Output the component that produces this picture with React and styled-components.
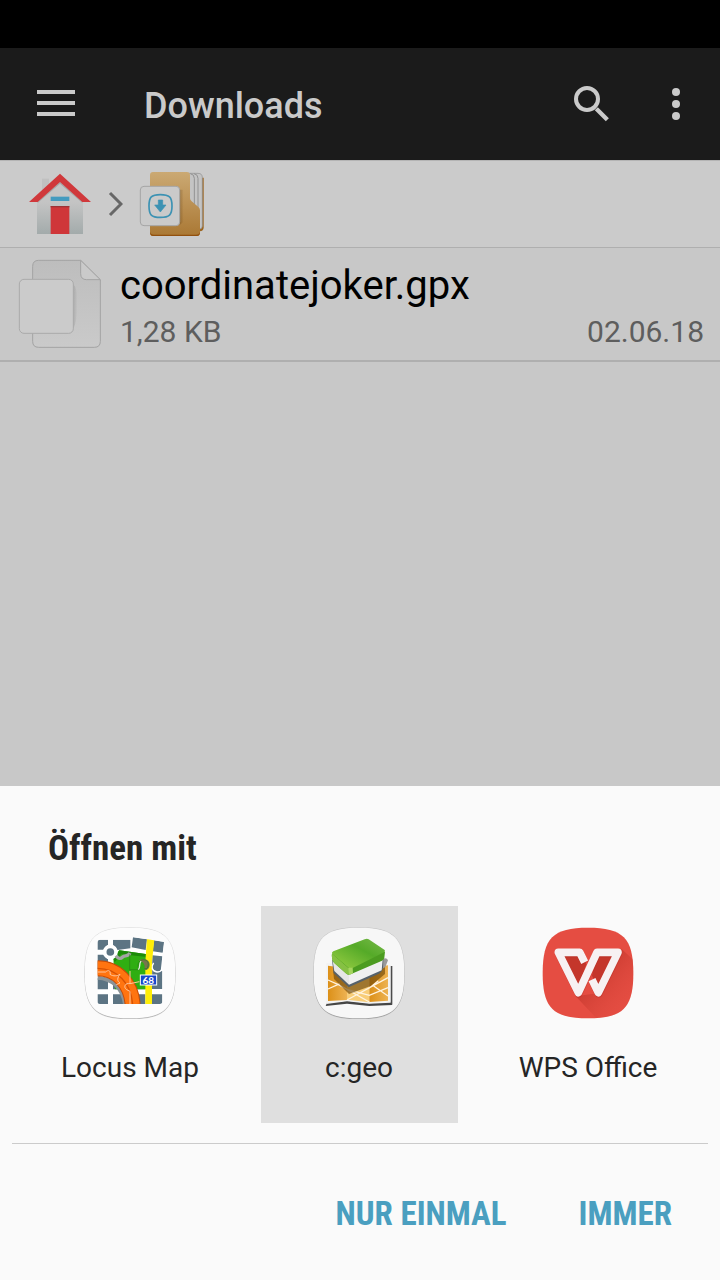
import React, { useState } from "react";
import styled, { createGlobalStyle } from "styled-components";

const GlobalStyle = createGlobalStyle`
  *, *::before, *::after { box-sizing: border-box; }
  body {
    margin: 0;
    background: #c8c8c8;
    font-family: Roboto, "Liberation Sans", sans-serif;
  }
  button {
    margin: 0;
    padding: 0;
    border: 0;
    background: none;
    font: inherit;
    color: inherit;
    cursor: pointer;
  }
  svg { display: block; flex: none; }
`;

const Page = styled.div`
  min-height: 100vh;
  display: flex;
  flex-direction: column;
`;

const StatusBar = styled.div`
  height: 48px;
  background: #000;
`;

const Toolbar = styled.header`
  display: flex;
  align-items: center;
  height: 112px;
  background: #1b1b1b;
  color: #cacaca;
`;

const ToolButton = styled.button`
  display: flex;
  align-items: center;
  justify-content: center;
  width: ${(p) => p.$width}px;
  height: 100%;
`;

const ScreenTitle = styled.h1`
  flex: 1;
  margin: 0;
  padding: 4px 0 0 32px;
  font-size: 36px;
  line-height: 44px;
  font-weight: 500;
`;

const Breadcrumb = styled.nav`
  display: flex;
  align-items: center;
  gap: 16px;
  height: 88px;
  padding: 0 28px;
  background: #cbcbcb;
  border-top: 1px solid #b4b4b4;
  border-bottom: 1px solid #afafaf;
`;

const CrumbButton = styled.button`
  display: flex;
`;

const FileList = styled.ul`
  flex: 1;
  margin: 0;
  padding: 0;
  list-style: none;
`;

const FileRow = styled.li`
  display: flex;
  align-items: center;
  gap: 18px;
  height: 114px;
  padding: 0 16px 0 18px;
  border-bottom: 2px solid #afafaf;
`;

const FileInfo = styled.div`
  flex: 1;
  min-width: 0;
  padding-top: 8px;
`;

const FileName = styled.div`
  font-size: 40px;
  line-height: 48px;
  color: #000;
`;

const FileMeta = styled.div`
  display: flex;
  justify-content: space-between;
  font-size: 30px;
  line-height: 44px;
  color: #5e5e5e;
`;

const Sheet = styled.section`
  background: #fafafa;
  color: #252525;
`;

const SheetTitle = styled.h2`
  margin: 0;
  padding: 41px 48px 35px;
  font-family: "Roboto Condensed", Roboto, sans-serif;
  font-size: 35px;
  line-height: 44px;
  font-weight: 700;
`;

const AppGrid = styled.div`
  display: grid;
  grid-template-columns: repeat(3, 1fr);
  gap: 32px;
  padding: 0 33px 20px 32px;
`;

const AppTile = styled.button`
  display: flex;
  flex-direction: column;
  align-items: center;
  gap: 31px;
  height: 217px;
  padding: 21px 1px 0 0;
  font-size: 28px;
  line-height: 36px;
  white-space: nowrap;
  background: ${(p) => (p.$selected ? "#dfdfdf" : "transparent")};
`;

const Actions = styled.footer`
  display: flex;
  justify-content: flex-end;
  gap: 72px;
  margin: 0 12px;
  padding: 44px 36px 40px;
  border-top: 1px solid #cbcbcb;
`;

const ActionButton = styled.button`
  font-family: "Roboto Condensed", Roboto, sans-serif;
  font-size: 33px;
  line-height: 52px;
  font-weight: 700;
  color: #4a9fc0;
`;

const MenuIcon = () => (
  <svg width="38" height="28" viewBox="0 0 38 28" fill="currentColor" aria-hidden="true">
    <path d="M0 0h38v4H0zM0 11h38v4H0zM0 22h38v4H0z" />
  </svg>
);

const SearchIcon = () => (
  <svg width="38" height="38" viewBox="0 0 114 114" fill="none" stroke="currentColor" aria-hidden="true">
    <circle cx="42" cy="42" r="33" strokeWidth="12" />
    <path d="M70 71l33 33" strokeWidth="13" />
  </svg>
);

const MoreIcon = () => (
  <svg width="8" height="32" viewBox="0 0 8 32" fill="currentColor" aria-hidden="true">
    <circle cx="4" cy="4" r="4" />
    <circle cx="4" cy="16" r="4" />
    <circle cx="4" cy="28" r="4" />
  </svg>
);

const HomeIcon = () => (
  <svg width="64" height="62" viewBox="54 54 192 186" aria-hidden="true">
    <defs>
      <linearGradient id="wall" x1="0" y1="0" x2="0" y2="1">
        <stop offset="0.4" stopColor="#c4c4c4" />
        <stop offset="1" stopColor="#a3abab" />
      </linearGradient>
    </defs>
    <path d="M96 71h21v35H96z" fill="#c0c0c0" />
    <path d="M150 78l69 58v101H81V136z" fill="url(#wall)" />
    <path d="M150 80l67 60v4l-67-58-67 58v-4z" fill="#000" opacity=".15" />
    <path d="M150 56l93 85h-26l-67-60-67 60H57z" fill="#d0383b" />
    <path d="M122 125h56v13h-56z" fill="#439bbf" />
    <path d="M122 153h56v84h-56z" fill="#cf3639" />
    <path d="M122 153h56v4h-56z" fill="#9e3336" />
  </svg>
);

const ChevronIcon = () => (
  <svg width="15" height="26" viewBox="0 0 15 26" fill="none" stroke="#676767" strokeWidth="3" aria-hidden="true">
    <path d="M2 2l11 11L2 24" />
  </svg>
);

const DownloadFolderIcon = () => (
  <svg width="66" height="66" viewBox="387 48 198 198" aria-hidden="true">
    <defs>
      <linearGradient id="folder" x1="0" y1="0" x2="0" y2="1">
        <stop offset="0" stopColor="#cba973" />
        <stop offset="1" stopColor="#aa7834" />
      </linearGradient>
      <linearGradient id="folderShade" x1="0" y1="0" x2="1" y2="0">
        <stop offset="0" stopColor="#50300a" stopOpacity=".3" />
        <stop offset="1" stopColor="#50300a" stopOpacity="0" />
      </linearGradient>
    </defs>
    <path d="M540 68h41v149q0 12-12 12h-29z" fill="#9c641d" />
    <path d="M530 55h34q13 0 13 13v145q0 10-12 10h-35z" fill="#c4c4c4" stroke="#8c8c8c" strokeWidth="2" />
    <path d="M541 56q12 2 12 14v90M552 56q12 2 12 14v110" fill="none" stroke="#929292" strokeWidth="3" />
    <path d="M429 51h101q10 0 10 10v69q0 5 5 9l20 17q5 4 5 10v67q0 10-10 10H430q-10 0-10-10V61q0-10 9-10z" fill="url(#folder)" />
    <path d="M420 230q0 13 10 13h130q10 0 10-13-2 9-12 9H432q-10 0-12-9z" fill="#92500e" />
    <path d="M509 104h12v96l-12 10z" fill="url(#folderShade)" />
    <rect x="391" y="94" width="118" height="118" rx="11" fill="#cacaca" stroke="#a5a5a5" strokeWidth="3" />
    <path d="M451 119c27 0 35 7 35 34s-8 34-35 34-34-7-34-34 7-34 34-34z" fill="none" stroke="#3c92b3" strokeWidth="5" />
    <path d="M445 135h13v15h10l-17 21-17-21h11z" fill="#3c92b3" stroke="#3c92b3" strokeWidth="2" strokeLinejoin="round" />
  </svg>
);

const DocumentIcon = () => (
  <svg width="84" height="90" viewBox="54 42 252 270" aria-hidden="true">
    <defs>
      <linearGradient id="paper" x1="0" y1="0" x2="0" y2="1">
        <stop offset="0" stopColor="#bdbdbd" />
        <stop offset="1" stopColor="#cacaca" />
      </linearGradient>
      <linearGradient id="paperShade" x1="0" y1="0" x2="1" y2="0">
        <stop offset="0" stopColor="#000" stopOpacity=".12" />
        <stop offset="1" stopColor="#000" stopOpacity="0" />
      </linearGradient>
    </defs>
    <path d="M116 46h126l59 59v184q0 18-18 18H116q-18 0-18-18V64q0-18 18-18z" fill="url(#paper)" stroke="#a3a3a3" strokeWidth="3" />
    <path d="M242 46v40q0 18 18 18h41z" fill="#cacaca" stroke="#a3a3a3" strokeWidth="3" strokeLinejoin="round" />
    <path d="M220 118q14 12 12 60 0 50-12 74z" fill="url(#paperShade)" />
    <rect x="58" y="103" width="162" height="162" rx="14" fill="#cbcbcb" stroke="#aaa" strokeWidth="3" />
  </svg>
);

const SQUIRCLE =
  "M180 38C285 38 316 69 316 174S285 310 180 310 44 279 44 174 75 38 180 38z";

const IconPlate = ({ fill }) => (
  <>
    <path d={SQUIRCLE} fill="none" stroke="#000" strokeWidth="3" opacity=".12" />
    <path d={SQUIRCLE} fill="#000" opacity=".2" transform="translate(0 3)" />
    <path d={SQUIRCLE} fill={fill} />
  </>
);

const LocusIcon = () => (
  <svg width="92" height="92" viewBox="42 36 276 276" aria-hidden="true">
    <defs>
      <clipPath id="locusClip">
        <path d="M92 74h90l6-8 94 14-5 50v129q0 8-8 8H90q-8 0-8-8V84q0-10 10-10z" />
      </clipPath>
    </defs>
    <IconPlate fill="#fcfcfc" />
    <g clipPath="url(#locusClip)">
      <path d="M80 64h204v206H80z" fill="#fff" />
      <path d="M82 74h32v18l-14 12H82zM129 74h52v26l-44 6-8-10zM82 119h18l14 14v30H82z" fill="#5c7483" />
      <path d="M189 67l42 6-4 32-42-8zM252 76l31 5-5 32-30-4zM247 121l30 3-5 44h5v54h-31z" fill="#5c7483" />
      <path d="M82 190h32v33H82zM82 238h32v30H82zM129 205h97v18h-97zM129 238h97v30h-97zM246 238h31v30h-31z" fill="#5c7483" />
      <path d="M130 130l18-24 84 12v105h-97z" fill="#2fae12" />
      <path d="M130 130l18-24 84 12v8l-78-8-20 24z" fill="#1c8a08" />
      <path d="M231 70l22 4-7 66v128h-20V140z" fill="#ffee08" />
      <circle cx="121" cy="111" r="17" fill="#5c7483" stroke="#fff" strokeWidth="11" />
      <path d="M138 122c6 10 14 10 20 4s16 0 22-12" fill="none" stroke="#a4a4a4" strokeWidth="10" />
      <path d="M206 137c12-9 31-5 33 10 1 12-7 20-16 18 4-15-2-27-17-28z" fill="#77744d" />
      <path d="M179 118v46h28c-7-15-1-28 13-30 14 0 19 13 11 27h-8" fill="none" stroke="#2a7d18" strokeWidth="2" />
      <path d="M205 164c8-10 0-14 8-26" fill="none" stroke="#e4e8e0" strokeWidth="4" />
      <path d="M251 144c-8 10-6 25 10 27 9 0 14-4 18-10" fill="none" stroke="#fff" strokeWidth="4" />
      <path d="M82 188c44 2 76 30 83 80" fill="none" stroke="#8a9397" strokeWidth="12" />
      <path d="M82 160c60 0 101 46 106 108" fill="none" stroke="#c74c06" strokeWidth="48" />
      <path d="M82 160c60 0 101 46 106 108" fill="none" stroke="#ff7410" strokeWidth="42" />
      <path d="M82 160c60 0 101 46 106 108" fill="none" stroke="#d75204" strokeWidth="4" />
      <path d="M82 171h25c8-8 16-4 13 7 10 7 22 5 30 0-8 10-10 20 0 26l-11 5M180 168v38c-13-4-22 10-10 18l10 5v38M180 206l28-6" fill="none" stroke="#ffc69c" strokeWidth="3" />
    </g>
    <rect x="211" y="180" width="49" height="30" fill="#1748cb" stroke="#fff" strokeWidth="3" />
    <text x="235" y="206" textAnchor="middle" fontFamily="Lato, sans-serif" fontSize="30" fontWeight="700" fill="#fff">68</text>
  </svg>
);

const CgeoIcon = () => (
  <svg width="92" height="92" viewBox="42 36 276 276" aria-hidden="true">
    <defs>
      <linearGradient id="cover" x1="0" y1="1" x2="1" y2="0">
        <stop offset="0" stopColor="#9bd044" />
        <stop offset=".6" stopColor="#55aa28" />
        <stop offset="1" stopColor="#78b94a" />
      </linearGradient>
      <linearGradient id="mapFold" x1="0" y1="0" x2="1" y2="0">
        <stop offset="0" stopColor="#dc9018" />
        <stop offset="1" stopColor="#edb252" />
      </linearGradient>
    </defs>
    <IconPlate fill="#f7f7f7" />
    <path d="M84 263l60-6 67 8 68-5v10l-68 3-67-7-64 7z" fill="#454545" />
    <path d="M274 153h6v116h-6z" fill="#4c4c4c" />
    <path d="M82 143l62 10 67 4 64-8v114l-64 3-67-7-62 8z" fill="#f2f2f2" />
    <path d="M87 152l57 8v95l-57 3z" fill="url(#mapFold)" />
    <path d="M144 160h67v102l-67-8z" fill="#f8cd78" />
    <path d="M211 160l56-9v106l-56 4z" fill="url(#mapFold)" />
    <path d="M87 195l36 16 88 50M87 222l36-16M144 223l67 18 56-23M144 255l123-67M224 213l43 30M211 219l27-22" fill="none" stroke="#fff3df" strokeWidth="4" />
    <path d="M102 165l3 27 45 45 65-24 43-36v-30z" fill="#6f4607" opacity=".65" />
    <path d="M249 132q14-6 18 4l-8 20-14 8z" fill="#9a9a9a" />
    <path d="M99 136l5 38 45 43 91-41q10-6 12-18l1-24z" fill="#56616a" />
    <path d="M101 138l49 38v33l-44-41z" fill="#e6e6e6" />
    <path d="M150 176l101-42-3 32-98 43z" fill="#f0f0f0" />
    <path d="M99 116q-1 5 0 12 1 10 6 15l38 34q5 4 12 1l94-41q6-3 7-9l2-18z" fill="#4c9c20" />
    <path d="M99 116q-1 5 0 12 1 10 6 15l38 34q4 3 8 2v-18z" fill="#86c043" />
    <path d="M103 109l94-36q7-3 12 0l47 31q5 4-1 8l-94 47q-6 3-12-1l-48-40q-5-5 2-9z" fill="url(#cover)" />
    <path d="M148 158l2 21q6 0 12-4l-1-17z" fill="#a6d55f" />
  </svg>
);

const WpsIcon = () => (
  <svg width="92" height="92" viewBox="36 36 276 276" aria-hidden="true">
    <defs>
      <clipPath id="wpsClip">
        <path d={SQUIRCLE} transform="translate(-6 0)" />
      </clipPath>
      <linearGradient id="wpsShade" x1="0" y1="0" x2="1" y2="1">
        <stop offset=".2" stopColor="#b93025" stopOpacity=".8" />
        <stop offset=".8" stopColor="#e24c41" stopOpacity="0" />
      </linearGradient>
    </defs>
    <path d={SQUIRCLE} transform="translate(-6 0)" fill="#e54d42" />
    <path clipPath="url(#wpsClip)" d="M275 102l70 65v170H225l-88-93 70-10z" fill="url(#wpsShade)" />
    <path d="M97 116h55l17 32-24 72zM201 116h50l-47 103-18-37z" fill="#c4362b" />
    <path d="M164 142l-15-30H85l60 121 56-121h63l-59 121-19-39" fill="none" stroke="#a82c23" strokeOpacity=".3" strokeWidth="24" strokeLinejoin="round" transform="translate(1 3)" />
    <path d="M164 142l-15-30H85l60 121 56-121h63l-59 121-19-39" fill="none" stroke="#f7f1f2" strokeWidth="23" strokeLinejoin="round" />
  </svg>
);

const APPS = [
  { name: "Locus Map", Icon: LocusIcon },
  { name: "c:geo", Icon: CgeoIcon },
  { name: "WPS Office", Icon: WpsIcon },
];

export default function App() {
  const [selected, setSelected] = useState("c:geo");

  return (
    <>
      <GlobalStyle />
      <Page>
        <StatusBar />
        <Toolbar>
          <ToolButton $width={112} aria-label="Menü"><MenuIcon /></ToolButton>
          <ScreenTitle>Downloads</ScreenTitle>
          <ToolButton $width={80} aria-label="Suchen"><SearchIcon /></ToolButton>
          <ToolButton $width={88} aria-label="Weitere Optionen"><MoreIcon /></ToolButton>
        </Toolbar>
        <Breadcrumb aria-label="Pfad">
          <CrumbButton aria-label="Start"><HomeIcon /></CrumbButton>
          <ChevronIcon />
          <CrumbButton aria-label="Downloads"><DownloadFolderIcon /></CrumbButton>
        </Breadcrumb>
        <FileList>
          <FileRow>
            <DocumentIcon />
            <FileInfo>
              <FileName>coordinatejoker.gpx</FileName>
              <FileMeta>
                <span>1,28 KB</span>
                <time dateTime="2018-06-02">02.06.18</time>
              </FileMeta>
            </FileInfo>
          </FileRow>
        </FileList>
        <Sheet role="dialog" aria-labelledby="sheet-title">
          <SheetTitle id="sheet-title">Öffnen mit</SheetTitle>
          <AppGrid>
            {APPS.map(({ name, Icon }) => (
              <AppTile
                key={name}
                $selected={name === selected}
                aria-pressed={name === selected}
                onClick={() => setSelected(name)}
              >
                <Icon />
                <span>{name}</span>
              </AppTile>
            ))}
          </AppGrid>
          <Actions>
            <ActionButton>NUR EINMAL</ActionButton>
            <ActionButton>IMMER</ActionButton>
          </Actions>
        </Sheet>
      </Page>
    </>
  );
}
